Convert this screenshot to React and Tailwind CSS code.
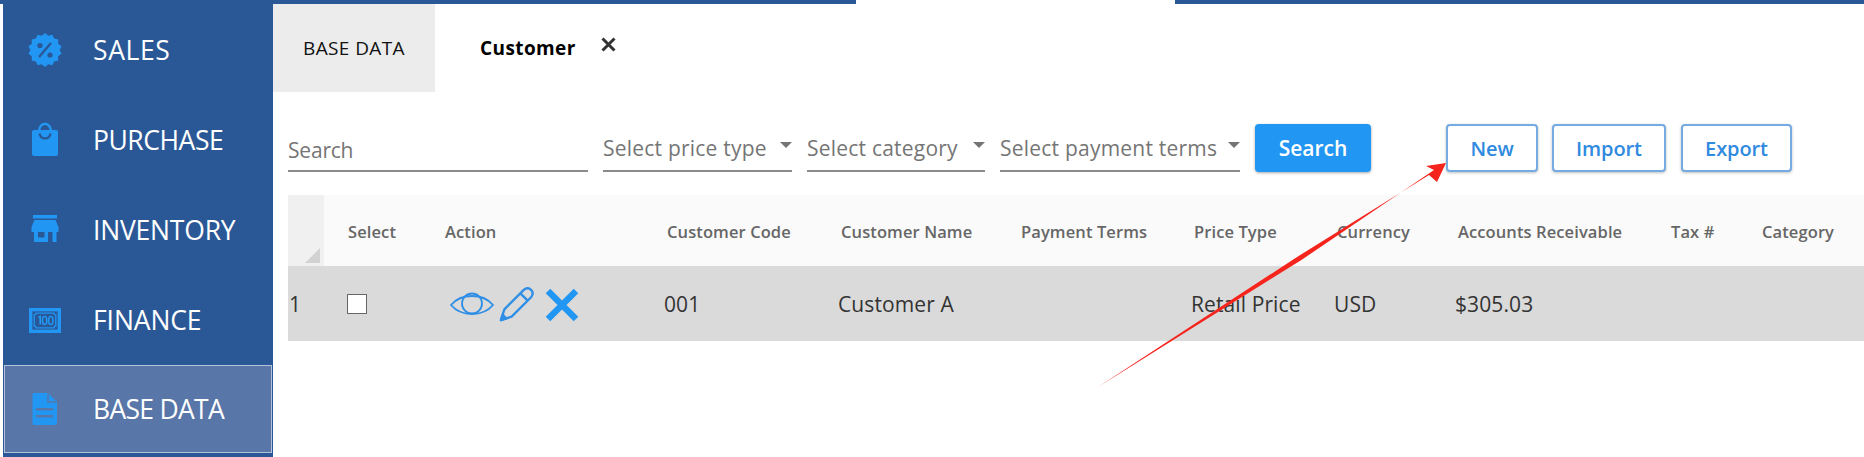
const FONT = "font-['Open_Sans',sans-serif]";

const badgePoints = Array.from({ length: 28 }, (_, i) => {
  const r = i % 2 === 0 ? 17 : 14.6;
  const a = (i * Math.PI) / 14 - Math.PI / 2;
  return `${(17 + r * Math.cos(a)).toFixed(2)},${(17 + r * Math.sin(a)).toFixed(2)}`;
}).join(" ");

function SalesIcon() {
  return (
    <svg width="34" height="34" viewBox="0 0 34 34">
      <polygon points={badgePoints} fill="#2196f3" />
      <path d="M11 24 L23 10" stroke="#2a5896" strokeWidth="2.4" />
      <circle cx="12" cy="12.5" r="2.6" fill="#2a5896" />
      <circle cx="22" cy="22" r="2.6" fill="#2a5896" />
    </svg>
  );
}
function BagIcon() {
  return (
    <svg className="mb-[3px]" width="28" height="34" viewBox="0 0 28 34">
      <path d="M8 10 C8 -1 20 -1 20 10" fill="none" stroke="#2196f3" strokeWidth="2.4" />
      <path d="M3 8 H25 Q27 8 27 10 V32 Q27 34 25 34 H3 Q1 34 1 32 V10 Q1 8 3 8 Z" fill="#2196f3" />
      <path d="M8.5 11.5 C9.5 18 18.5 18 19.5 11.5" fill="none" stroke="#2a5896" strokeWidth="2.2" />
    </svg>
  );
}
function StoreIcon() {
  return (
    <svg className="mb-[4px]" width="28" height="27" viewBox="0 0 28 27">
      <rect x="2" y="0" width="24" height="3.5" fill="#2196f3" />
      <path d="M3.5 5 H24.5 L27.5 12 V17 H25.5 V27 H21.5 V17 H17 V27 H3 V17 H0.5 V12 Z" fill="#2196f3" />
      <rect x="7" y="17" width="6.5" height="5.5" fill="#2a5896" />
    </svg>
  );
}
function MoneyIcon() {
  return (
    <svg width="32" height="25" viewBox="0 0 32 25">
      <rect x="1.7" y="1.7" width="28.6" height="21.6" fill="none" stroke="#2196f3" strokeWidth="3.4" />
      <path d="M7 5.2 H25 Q25 7 26.8 7 V18 Q25 18 25 19.8 H7 Q7 18 5.2 18 V7 Q7 7 7 5.2 Z" fill="none" stroke="#2196f3" strokeWidth="1.3" />
      <path d="M9.5 9.5 L11.2 8.5 V16.5" fill="none" stroke="#2196f3" strokeWidth="1.6" />
      <ellipse cx="15.6" cy="12.5" rx="2.2" ry="4" fill="none" stroke="#2196f3" strokeWidth="1.6" />
      <ellipse cx="21.8" cy="12.5" rx="2.2" ry="4" fill="none" stroke="#2196f3" strokeWidth="1.6" />
    </svg>
  );
}
function FileIcon() {
  return (
    <svg width="26" height="32" viewBox="0 0 26 32">
      <path d="M2 0 H16 L25 9 V30 Q25 32 23 32 H2 Q0.5 32 0.5 30 V2 Q0.5 0 2 0 Z" fill="#2196f3" />
      <path d="M16 1 V9 H24" fill="none" stroke="#5876a8" strokeWidth="1.5" />
      <rect x="4" y="15" width="17" height="2.4" fill="#5876a8" />
      <rect x="4" y="22" width="17" height="2.4" fill="#5876a8" />
    </svg>
  );
}
function EyeIcon() {
  return (
    <svg width="44" height="28" viewBox="0 0 44 28" fill="none" stroke="#2f8fe6" strokeWidth="1.8">
      <path d="M1 14 C11 2 33 2 43 14 C33 26 11 26 1 14 Z" />
      <circle cx="22" cy="12.5" r="10" />
    </svg>
  );
}
function PencilIcon() {
  return (
    <svg width="35" height="35" viewBox="0 0 36 36" fill="none" stroke="#2f8fe6" strokeWidth="2.4" strokeLinejoin="round">
      <path d="M2 34 L5.5 23 L25.5 3 C28 0.8 31 1 33 3 C35 5 35 8 33 10.5 L13 30.5 Z" />
      <path d="M22 6.5 L29.5 14" />
      <path d="M2 34 L3.8 28.5 L7.5 32.3 Z" fill="#2f8fe6" />
    </svg>
  );
}
function XIcon() {
  return (
    <svg width="34" height="34" viewBox="0 0 34 34" stroke="#2196f3" strokeWidth="6.4">
      <path d="M3 3 L31 31 M31 3 L3 31" />
    </svg>
  );
}

function NavItem({ icon, label, active, tracking }) {
  return (
    <div
      className={
        active
          ? "mx-[1px] flex h-[88px] items-center border border-[#b4c2d8] bg-[#5876a8]"
          : "flex h-[90px] items-center"
      }
    >
      <div className={active ? "flex w-[79px] justify-center" : "flex w-[83px] justify-center"}>{icon}</div>
      <span className={`mt-[2px] text-[26.5px] text-white ${tracking} ${active ? "ml-[9px]" : "ml-[7px]"}`}>{label}</span>
    </div>
  );
}

function Select({ label, width }) {
  return (
    <div className={`flex h-[48px] items-center justify-between border-b-2 border-[#8a8a8a] ${width}`}>
      <span className="mt-[3px] text-[21px] tracking-[0.22px] text-[#757575]">{label}</span>
      <span className="mb-[5px] h-0 w-0 border-x-[6px] border-t-[6px] border-x-transparent border-t-[#757575]" />
    </div>
  );
}

function OutlineButton({ label, width }) {
  return (
    <button className={`flex h-[48px] items-center justify-center rounded-[4px] border-2 border-[#74abe0] bg-white pt-[2px] text-[20px] font-semibold tracking-[-0.1px] text-[#2f8ae0] shadow-[0_1px_3px_rgba(0,0,0,0.25)] ${width}`}>
      {label}
    </button>
  );
}

const headers = [
  ["Select", "w-[97px]"],
  ["Action", "w-[222px]"],
  ["Customer Code", "w-[174px]"],
  ["Customer Name", "w-[180px]"],
  ["Payment Terms", "w-[173px]"],
  ["Price Type", "w-[143px]"],
  ["Currency", "w-[121px]"],
  ["Accounts Receivable", "w-[213px]"],
  ["Tax #", "w-[91px]"],
  ["Category", "w-[126px]"],
];

function Cell({ width, children }) {
  return <div className={`flex h-full items-center pl-[21px] ${width}`}>{children}</div>;
}

export default function App() {
  return (
    <div className={`relative h-[457px] w-[1864px] overflow-hidden bg-white ${FONT}`}>
      <div className="flex h-[4px]">
        <div className="w-[856px] bg-[#2a5896]" />
        <div className="w-[319px]" />
        <div className="flex-1 bg-[#2a5896]" />
      </div>
      <div className="flex h-[453px]">
        <aside className="ml-[3px] flex w-[270px] flex-col bg-[#2a5896] pt-[1px]">
          <NavItem icon={<SalesIcon />} label="SALES" tracking="tracking-[0.6px]" />
          <NavItem icon={<BagIcon />} label="PURCHASE" tracking="tracking-[-0.45px]" />
          <NavItem icon={<StoreIcon />} label="INVENTORY" tracking="tracking-[-0.2px]" />
          <NavItem icon={<MoneyIcon />} label="FINANCE" tracking="tracking-[-0.1px]" />
          <NavItem icon={<FileIcon />} label="BASE DATA" tracking="tracking-[-0.7px]" active />
        </aside>
        <main className="flex-1">
          <div className="flex h-[88px]">
            <div className="flex w-[162px] items-center justify-center bg-[#ececec] text-[19px] tracking-[0.4px] text-[#111]">
              BASE DATA
            </div>
            <div className="flex items-center pl-[45px]">
              <span className="mt-[1px] text-[19px] font-bold tracking-[0.4px] text-black">Customer</span>
              <span className="mb-[7px] ml-[25px] text-[0px]">
                <svg width="15" height="15" viewBox="0 0 15 15" stroke="#333" strokeWidth="3">
                  <path d="M1.5 1.5 L13.5 13.5 M13.5 1.5 L1.5 13.5" />
                </svg>
              </span>
            </div>
          </div>
          <div className="flex items-start pl-[15px] pt-[32px]">
            <div className="flex h-[48px] w-[300px] items-center border-b-2 border-[#8a8a8a]">
              <span className="mt-[8px] text-[21px] tracking-[-0.2px] text-[#757575]">Search</span>
            </div>
            <div className="ml-[15px]"><Select label="Select price type" width="w-[189px]" /></div>
            <div className="ml-[15px]"><Select label="Select category" width="w-[178px]" /></div>
            <div className="ml-[15px]"><Select label="Select payment terms" width="w-[240px]" /></div>
            <button className="ml-[15px] flex h-[48px] w-[116px] items-center justify-center rounded-[4px] bg-[#2196f3] pt-[2px] text-[21px] font-semibold text-white shadow-[0_1px_3px_rgba(0,0,0,0.35)]">
              Search
            </button>
            <div className="ml-[75px]"><OutlineButton label="New" width="w-[92px]" /></div>
            <div className="ml-[14px]"><OutlineButton label="Import" width="w-[114px]" /></div>
            <div className="ml-[15px]"><OutlineButton label="Export" width="w-[111px]" /></div>
          </div>
          <div className="ml-[15px] mt-[23px]">
            <div className="flex h-[71px] bg-[#fafafa]">
              <div className="relative w-[36px] bg-[#f0f0f0]">
                <div className="absolute bottom-[3px] right-[4px] h-0 w-0 border-b-[15px] border-l-[15px] border-b-[#d2d2d2] border-l-transparent" />
              </div>
              {headers.map(([h, w]) => (
                <div key={h} className={`flex items-center pl-[24px] pt-[3px] ${w}`}>
                  <span className="whitespace-nowrap text-[16.5px] font-semibold tracking-[0.1px] text-[#666]">{h}</span>
                </div>
              ))}
            </div>
            <div className="flex h-[75px] items-center bg-[#dadada] text-[21px] tracking-[0.1px] text-[#333]">
              <div className="w-[36px] pl-[1px] pt-[3px]">1</div>
              <Cell width="w-[97px]">
                <span className="ml-[2px] mt-[1px] h-[20px] w-[20px] border border-[#666] bg-white" />
              </Cell>
              <Cell width="w-[222px]">
                <div className="ml-[8px] mt-[2px] flex items-center gap-[5px]">
                  <EyeIcon />
                  <PencilIcon />
                  <span className="ml-[6px] text-[0px]"><XIcon /></span>
                </div>
              </Cell>
              <Cell width="w-[174px]"><span className="pt-[3px]">001</span></Cell>
              <Cell width="w-[180px]"><span className="pt-[3px]">Customer A</span></Cell>
              <Cell width="w-[173px]" />
              <Cell width="w-[143px]"><span className="pt-[3px]">Retail Price</span></Cell>
              <Cell width="w-[121px]"><span className="pt-[3px]">USD</span></Cell>
              <Cell width="w-[213px]"><span className="pt-[3px]">$305.03</span></Cell>
              <Cell width="w-[91px]" />
              <Cell width="w-[126px]" />
            </div>
          </div>
        </main>
      </div>
      <svg className="pointer-events-none absolute left-0 top-0" width="1864" height="457" viewBox="0 0 1864 457">
        <polygon
          points="1098,387 1298.6,256 1429,175 1437,182 1446,163 1426,166 1434,170 1301.4,260"
          fill="#f5241c"
        />
      </svg>
    </div>
  );
}
